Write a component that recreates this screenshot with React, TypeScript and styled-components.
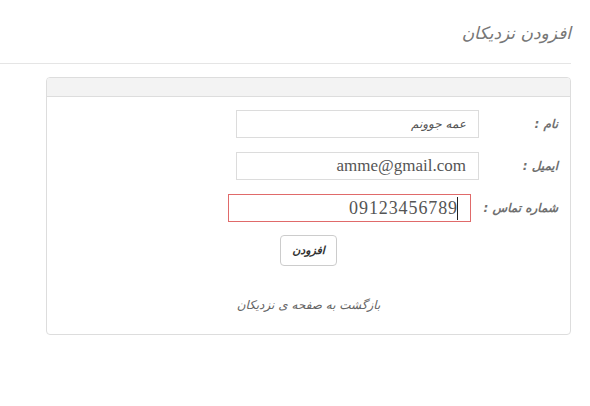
import styled, { createGlobalStyle } from "styled-components";

const GlobalStyle = createGlobalStyle`
  html, body {
    margin: 0;
    padding: 0;
    background: #fff;
  }
  body {
    font-family: "DejaVu Sans", "Noto Sans", sans-serif;
    color: #555;
  }
`;

const Page = styled.div`
  direction: rtl;
  width: 590px;
  padding-right: 19px;
  box-sizing: border-box;
`;

const Header = styled.div`
  height: 64px;
  border-bottom: 1px solid #e5e5e5;
  display: flex;
  align-items: center;
  padding-top: 2px;
  box-sizing: border-box;
`;

const Title = styled.h1`
  margin: 0;
  font-size: 17px;
  font-weight: normal;
  font-style: italic;
  color: #777;
`;

const Panel = styled.div`
  margin: 13px 0 0 46px;
  border: 1px solid #ddd;
  border-radius: 4px;
  overflow: hidden;
`;

const PanelHeading = styled.div`
  height: 18px;
  background: #f3f3f3;
  border-bottom: 1px solid #ddd;
`;

const PanelBody = styled.div`
  padding: 13px 12px 22px 12px;
  display: flex;
  flex-direction: column;
`;

const Row = styled.div`
  display: flex;
  align-items: center;
  height: 28px;
  margin-bottom: 14px;
`;

const Label = styled.label`
  width: 79px;
  flex: none;
  font-size: 12px;
  font-weight: bold;
  font-style: italic;
  color: #707070;
`;

const FieldWrap = styled.div<{ $shift?: number }>`
  position: relative;
  margin-right: ${(p) => p.$shift ?? 0}px;
`;

const Field = styled.input<{ $invalid?: boolean; $latin?: boolean; $size?: number; $spacing?: number }>`
  width: 243px;
  height: 28px;
  box-sizing: border-box;
  border: 1px solid ${(p) => (p.$invalid ? "#e06a6a" : "#dcdcdc")};
  padding: 0 12px;
  background: #fff;
  color: #555;
  font-family: ${(p) =>
    p.$latin
      ? '"Liberation Serif", "DejaVu Serif", serif'
      : '"DejaVu Sans", sans-serif'};
  font-style: ${(p) => (p.$latin ? "normal" : "italic")};
  font-size: ${(p) => p.$size ?? 12}px;
  letter-spacing: ${(p) => p.$spacing ?? 0}px;
  outline: none;
  text-align: right;
  direction: ${(p) => (p.$latin ? "ltr" : "rtl")};
`;

const Caret = styled.span`
  position: absolute;
  right: 13px;
  top: 3px;
  width: 1px;
  height: 23px;
  background: #222;
`;

const Actions = styled.div`
  display: flex;
  justify-content: center;
  margin-top: -1px;
`;

const Button = styled.button`
  width: 57px;
  height: 31px;
  border: 1px solid #ccc;
  border-radius: 4px;
  background: #fff;
  font-family: "DejaVu Sans", sans-serif;
  font-style: italic;
  font-weight: bold;
  font-size: 11px;
  color: #333;
  cursor: pointer;
`;

const BackLink = styled.a`
  display: block;
  margin-top: 32px;
  text-align: center;
  font-size: 12px;
  font-style: italic;
  color: #666;
  text-decoration: none;
`;

export default function App() {
  return (
    <>
      <GlobalStyle />
      <Page>
        <Header>
          <Title>افزودن نزدیکان</Title>
        </Header>
        <Panel>
          <PanelHeading />
          <PanelBody>
            <Row>
              <Label>نام :</Label>
              <FieldWrap>
                <Field defaultValue="عمه جوونم" />
              </FieldWrap>
            </Row>
            <Row>
              <Label>ایمیل :</Label>
              <FieldWrap>
                <Field $latin $size={17} defaultValue="amme@gmail.com" />
              </FieldWrap>
            </Row>
            <Row>
              <Label>شماره تماس :</Label>
              <FieldWrap $shift={8}>
                <Field $latin $invalid $size={18} $spacing={0.9} defaultValue="09123456789" />
                <Caret />
              </FieldWrap>
            </Row>
            <Actions>
              <Button>افزودن</Button>
            </Actions>
            <BackLink href="#">بازگشت به صفحه ی نزدیکان</BackLink>
          </PanelBody>
        </Panel>
      </Page>
    </>
  );
}
